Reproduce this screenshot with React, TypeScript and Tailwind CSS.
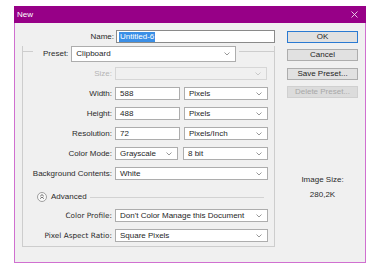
const sans = "font-['Liberation_Sans',Arial,sans-serif]";

function Chevron({ light }: { light?: boolean }) {
  return (
    <svg width="6" height="4" viewBox="0 0 6 4" className="shrink-0">
      <path d="M0.5 0.5 L3 3 L5.5 0.5" fill="none" stroke={light ? "#c4c4c4" : "#8c8c8c"} strokeWidth="0.9" />
    </svg>
  );
}

function Select({ value, w, disabled, h = "h-[13px]" }: { value: string; w: string; disabled?: boolean; h?: string }) {
  return (
    <div
      className={`${w} ${h} flex items-center justify-between pl-[4px] pr-[5px] border text-[8px] leading-none ${
        disabled ? "bg-[#f0f0f0] border-[#d6d6d6]" : "bg-white border-[#adadad] text-[#1e1e1e]"
      }`}
    >
      <span className="whitespace-nowrap">{value}</span>
      <Chevron light={disabled} />
    </div>
  );
}

function Field({ value, w }: { value: string; w: string }) {
  return (
    <div className={`${w} h-[13px] flex items-center pl-[4px] bg-white border border-[#adadad] text-[8px] leading-none text-[#1e1e1e]`}>
      {value}
    </div>
  );
}

function Row({ label, children, dim, wide }: { label: string; children: React.ReactNode; dim?: boolean; wide?: boolean }) {
  return (
    <div className="flex items-center mt-[7px]">
      <span
        className={`w-[92px] pr-[3px] text-right leading-none whitespace-nowrap ${
          wide ? "font-['DejaVu_Sans',sans-serif] text-[7.3px]" : "text-[8px]"
        } ${dim ? "text-[#b4b4b4]" : "text-[#2a2a2a]"}`}
      >
        {label}
      </span>
      {children}
    </div>
  );
}

function Button({ label, mt, primary, disabled }: { label: string; mt: string; primary?: boolean; disabled?: boolean }) {
  return (
    <div
      className={`${mt} h-[12px] w-[71px] flex items-center justify-center border text-[8px] leading-none ${
        primary
          ? "bg-[#e1e1e1] border-[#2a7ad2] text-[#1e1e1e]"
          : disabled
          ? "bg-[#dcdcdc] border-[#d0d0d0] text-[#a8a8a8]"
          : "bg-[#e1e1e1] border-[#adadad] text-[#1e1e1e]"
      }`}
    >
      {label}
    </div>
  );
}

export default function App() {
  return (
    <div className={`w-[380px] h-[273px] bg-white pt-[6px] pl-[14px] ${sans}`}>
      <div className="w-[352px] h-[257px] flex flex-col border-x border-b border-[#d070d0] bg-[#f0f0f0]">
        {/* title bar */}
        <div className="h-[17px] -mx-px flex items-center justify-between bg-[#970087] pl-[3px] pr-[8px] text-white text-[8px]">
          <span>New</span>
          <svg width="7" height="7" viewBox="0 0 7 7">
            <path d="M0.5 0.5 L6.5 6.5 M6.5 0.5 L0.5 6.5" stroke="#f2d8ee" strokeWidth="0.9" />
          </svg>
        </div>

        <div className="flex">
          {/* left column */}
          <div className="w-[262px] pl-[7px] pt-[7px]">
            <div className="flex items-center">
              <span className="w-[94px] pr-[2px] text-right text-[8px] leading-none text-[#2a2a2a]">Name:</span>
              <div className="w-[159px] h-[13px] flex items-center pl-[2px] bg-white border border-[#8a8a8a] text-[8px] leading-none">
                <span className="bg-[#3b8fe6] text-white px-[1px] py-[1px]">Untitled-6</span>
              </div>
            </div>

            <div className="mt-[8px] w-[253px] border-x border-b border-[#cdcdcd] pb-[4px]">
              <div className="-mt-[5px] h-[16px] flex items-start">
                <div className="w-[10px] mt-[5px] border-t border-[#cdcdcd]" />
                <span className="ml-[10px] h-[16px] flex items-center text-[8px] leading-none text-[#2a2a2a]">Preset:</span>
                <div className="ml-[3px]">
                  <Select value="Clipboard" w="w-[165px]" h="h-[16px]" />
                </div>
                <div className="flex-1 ml-[3px] mt-[5px] border-t border-[#cdcdcd]" />
              </div>

              <div className="flex items-center mt-[5px]">
                <span className="w-[92px] pr-[3px] text-right text-[8px] leading-none text-[#b4b4b4]">Size:</span>
                <Select value="" w="w-[152px]" disabled />
              </div>
              <Row label="Width:">
                <Field value="588" w="w-[65px]" />
                <div className="ml-[4px]">
                  <Select value="Pixels" w="w-[84px]" />
                </div>
              </Row>
              <Row label="Height:">
                <Field value="488" w="w-[65px]" />
                <div className="ml-[4px]">
                  <Select value="Pixels" w="w-[84px]" />
                </div>
              </Row>
              <Row label="Resolution:">
                <Field value="72" w="w-[65px]" />
                <div className="ml-[4px]">
                  <Select value="Pixels/Inch" w="w-[84px]" />
                </div>
              </Row>
              <Row label="Color Mode:">
                <Select value="Grayscale" w="w-[63px]" />
                <div className="ml-[5px]">
                  <Select value="8 bit" w="w-[85px]" />
                </div>
              </Row>
              <Row label="Background Contents:">
                <Select value="White" w="w-[153px]" />
              </Row>

              <div className="mt-[12px] h-[10px] flex items-center pl-[14px] pr-[10px]">
                <svg width="10" height="10" viewBox="0 0 10 10" className="shrink-0">
                  <circle cx="5" cy="5" r="4.5" fill="#fafafa" stroke="#8a8a8a" strokeWidth="0.8" />
                  <path d="M3.2 4.2 L5 2.6 L6.8 4.2 M3.2 6.6 L5 5 L6.8 6.6" fill="none" stroke="#444" strokeWidth="0.8" />
                </svg>
                <span className="ml-[4px] text-[8px] leading-none text-[#2a2a2a]">Advanced</span>
                <div className="flex-1 ml-[3px] border-t border-[#d2d2d2]" />
              </div>

              <div className="mt-[7px]">
                <Row label="Color Profile:" wide>
                  <Select value="Don't Color Manage this Document" w="w-[153px]" />
                </Row>
              </div>
              <Row label="Pixel Aspect Ratio:" wide>
                <Select value="Square Pixels" w="w-[153px]" />
              </Row>
            </div>
          </div>

          {/* right column */}
          <div className="ml-[10px] w-[71px] flex flex-col">
            <Button label="OK" mt="mt-[8px]" primary />
            <Button label="Cancel" mt="mt-[6px]" />
            <Button label="Save Preset..." mt="mt-[7px]" />
            <Button label="Delete Preset..." mt="mt-[6px]" disabled />
            <div className="mt-[74px] text-center text-[8px] leading-[15px] text-[#2a2a2a]">
              <div>Image Size:</div>
              <div>280,2K</div>
            </div>
          </div>
        </div>
      </div>
    </div>
  );
}
